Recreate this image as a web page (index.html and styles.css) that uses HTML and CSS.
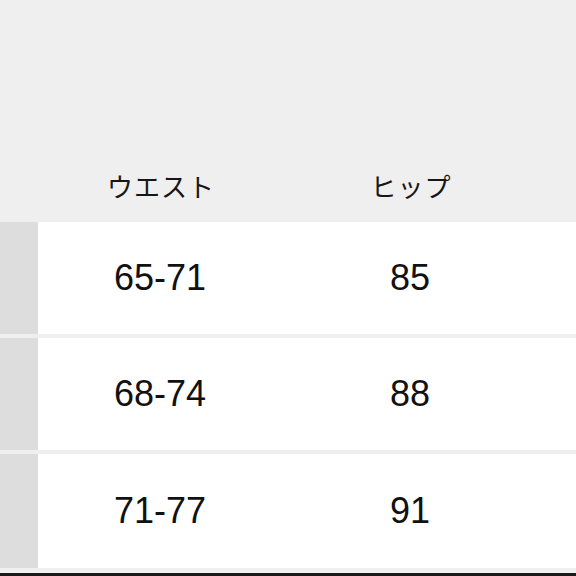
FILE: index.html
```html
<!DOCTYPE html>
<html lang="ja">
<head>
<meta charset="utf-8">
<link rel="stylesheet" href="styles.css">
</head>
<body>
<div class="table">
  <div class="row head">
    <div class="label"></div>
    <div class="cell h">ウエスト</div>
    <div class="cell h">ヒップ</div>
    <div class="cell"></div>
  </div>
  <div class="row body">
    <div class="label"></div>
    <div class="cell n">65-71</div>
    <div class="cell n">85</div>
    <div class="cell"></div>
  </div>
  <div class="row body">
    <div class="label"></div>
    <div class="cell n">68-74</div>
    <div class="cell n">88</div>
    <div class="cell"></div>
  </div>
  <div class="row body last">
    <div class="label"></div>
    <div class="cell n">71-77</div>
    <div class="cell n">91</div>
    <div class="cell"></div>
  </div>
</div>
<div class="bottom"></div>
</body>
</html>
```
FILE: styles.css
```css
html, body {
  margin: 0;
  padding: 0;
  background: #efefef;
  height: 576px;
  overflow: hidden;
}
body {
  display: flex;
  flex-direction: column;
}
.table {
  display: flex;
  flex-direction: column;
  gap: 4px;
  flex: 1;
}
.row {
  display: grid;
  grid-template-columns: 38px 242px 254px 1fr;
  column-gap: 2px;
}
.row.head {
  height: 222px;
  align-items: end;
  margin-bottom: -4px;
}
.row.body {
  height: 112px;
}
.row.body.last {
  height: 114px;
}
.row.body .label {
  background: #dddddd;
}
.row.body .cell {
  background: #ffffff;
  margin-left: -2px;
}
.row.body .cell:first-of-type {
  margin-left: 0;
}
.cell {
  display: flex;
  align-items: center;
  justify-content: center;
  color: #111111;
}
.cell.h {
  font-family: "Noto Sans CJK JP", sans-serif;
  font-size: 26px;
  line-height: 26px;
  letter-spacing: 1px;
  padding-bottom: 23px;
  color: #161616;
}
.cell.n {
  font-family: "Liberation Sans", Arial, sans-serif;
  font-size: 36px;
}
.bottom {
  height: 3px;
  margin-top: 4px;
  background: #1a1a1a;
}
```
